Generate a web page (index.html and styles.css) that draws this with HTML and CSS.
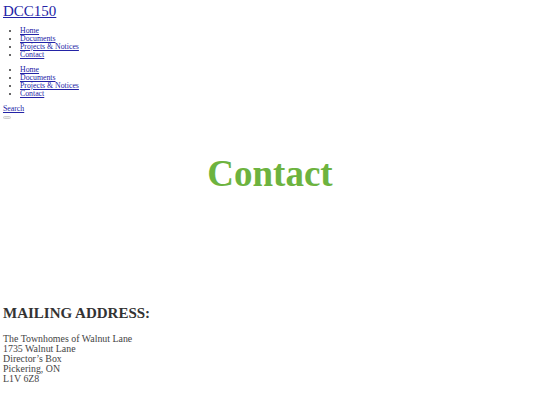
FILE: index.html
```html
<!DOCTYPE html>
<html>
<head>
<meta charset="utf-8">
<title>Contact</title>
<link rel="stylesheet" href="styles.css">
</head>
<body>
<header class="site-header">
  <a class="site-title" href="#">DCC150</a>
  <ul class="menu">
    <li><a href="#">Home</a></li>
    <li><a href="#">Documents</a></li>
    <li><a href="#">Projects &amp; Notices</a></li>
    <li><a href="#">Contact</a></li>
  </ul>
  <ul class="menu">
    <li><a href="#">Home</a></li>
    <li><a href="#">Documents</a></li>
    <li><a href="#">Projects &amp; Notices</a></li>
    <li><a href="#">Contact</a></li>
  </ul>
  <a class="search" href="#">Search</a>
  <button class="toggle"></button>
</header>
<main>
  <h1 class="page-title">Contact</h1>
  <h2 class="section-title">MAILING ADDRESS:</h2>
  <p class="address">The Townhomes of Walnut Lane<br>1735 Walnut Lane<br>Director’s Box<br>Pickering, ON<br>L1V 6Z8</p>
</main>
</body>
</html>
```
FILE: styles.css
```css
html, body {
  margin: 0;
  padding: 0;
  background: #ffffff;
}
body {
  padding: 3px;
  font-family: "Liberation Serif", "Times New Roman", serif;
  color: #333333;
}
a {
  color: #2323a6;
}
.site-header {
  display: flex;
  flex-direction: column;
  align-items: flex-start;
}
.site-title {
  font-size: 15px;
  line-height: 17px;
  margin-top: 0;
}
.menu {
  margin: 7px 0 0 0;
  padding-left: 17px;
  font-size: 7.8px;
  line-height: 8px;
}
.menu + .menu {
  margin-top: 7px;
}
.search {
  font-size: 7.8px;
  line-height: 8px;
  margin-top: 7px;
}
.toggle {
  width: 8px;
  height: 3px;
  padding: 0;
  margin-top: 3px;
  border: 1px solid #cfcfcf;
  border-radius: 2px;
  background: #ececec;
}
.page-title {
  text-align: center;
  color: #6db33f;
  font-size: 37px;
  line-height: 42px;
  margin: 34px 0 0 0;
}
.section-title {
  font-size: 15px;
  line-height: 20px;
  margin: 108px 0 0 0;
  color: #333333;
}
.address {
  font-size: 9.9px;
  line-height: 10px;
  margin: 11px 0 0 0;
  color: #444444;
}
```
